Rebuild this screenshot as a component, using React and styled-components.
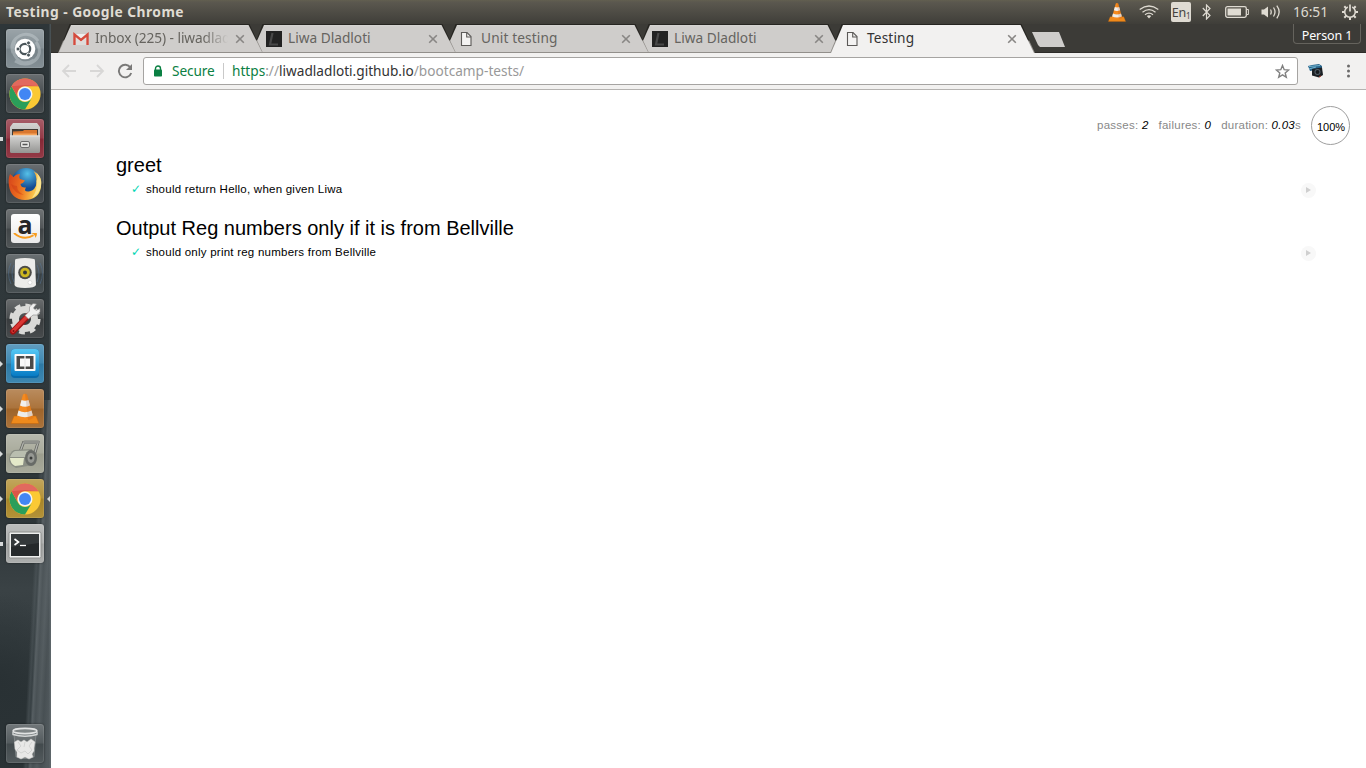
import React from "react";
import styled, { createGlobalStyle, css } from "styled-components";

const GlobalStyle = createGlobalStyle`
  * { box-sizing: border-box; }
  html, body { margin: 0; padding: 0; }
  body { width: 1366px; height: 768px; overflow: hidden; background: #fff; }
  svg { display: block; flex: none; }
`;

const uiFont = css`font-family: "Noto Sans", "Open Sans", sans-serif;`;

const Desktop = styled.div`
  display: flex;
  flex-direction: column;
  width: 1366px;
  height: 768px;
  overflow: hidden;
`;

/* ---------- top panel ---------- */
const Panel = styled.header`
  ${uiFont}
  display: flex;
  align-items: center;
  justify-content: space-between;
  height: 24px;
  flex: none;
  padding: 0 8px 0 6px;
  background: linear-gradient(#625f50 0, #5b584f 2px, #3f3e39 24px);
  color: #dfdbd2;
`;
const WindowTitle = styled.div`
  font-size: 13.8px;
  font-weight: 700;
  line-height: 24px;
  white-space: nowrap;
  letter-spacing: 0.46px;
`;
const Indicators = styled.div`
  display: flex;
  align-items: center;
  height: 24px;
`;
const Slot = styled.div`
  display: flex;
  width: ${(p) => p.$w}px;
  margin-left: ${(p) => p.$gap || 0}px;
`;
const Keyboard = styled(Slot)`
  align-items: center;
  justify-content: center;
  height: 20px;
  border-radius: 2px;
  background: #dfdbd2;
  color: #45433e;
  font-size: 12.5px;
  letter-spacing: -0.3px;
  sub { font-size: 8px; line-height: 8px; align-self: flex-end; margin-bottom: 2px; }
`;
const Clock = styled(Slot)`
  font-size: 13.8px;
  line-height: 24px;
  letter-spacing: -0.05px;
  white-space: nowrap;
`;

/* ---------- launcher ---------- */
const Workspace = styled.div`
  display: flex;
  flex: 1;
  min-height: 0;
`;
const Launcher = styled.nav`
  display: flex;
  flex-direction: column;
  justify-content: space-between;
  width: 51px;
  flex: none;
  padding: 5px 0 5px;
  background:
    linear-gradient(90deg, transparent 49px, rgba(110,120,124,.4) 50px),
    linear-gradient(93deg, transparent 42px, rgba(85,94,98,.5) 45px, rgba(70,79,83,.5) 47px, rgba(105,113,117,.7) 49px, rgba(86,94,98,.7) 52px, rgba(100,108,112,.7) 56px, rgba(84,92,96,.7) 60px, rgba(98,106,110,.7) 66px) 0 100% / 51px 368px no-repeat,
    radial-gradient(ellipse 70px 90px at 0 660px, #293134, transparent),
    linear-gradient(#2e3639 0, #30383b 45%, #2d3538 66%, #3a4245 76%, #343c3f 84%, #2b3336 90%, #2b3336 100%);
`;
const LauncherGroup = styled.div`
  display: flex;
  flex-direction: column;
  gap: 6px;
`;
const LauncherItem = styled.div`
  display: flex;
  align-items: center;
  height: 39px;
`;
const Marker = styled.div`
  width: 6px;
  flex: none;
  svg { fill: #d6d9da; }
`;
const Tile = styled.div`
  display: flex;
  justify-content: center;
  width: 38px;
  flex: none;
  height: 39px;
  border-radius: 3px;
  background: linear-gradient(rgba(255,255,255,.24), rgba(255,255,255,.08) 48%, rgba(0,0,0,.04) 52%, rgba(255,255,255,.07)), ${(p) => p.$bg};
  box-shadow: inset 0 0 0 1px rgba(255,255,255,.1), 0 0 2px rgba(0,0,0,.55);
`;

/* ---------- browser chrome ---------- */
const Browser = styled.main`
  display: flex;
  flex-direction: column;
  flex: 1;
  min-width: 0;
  background: #fff;
`;
const TabStrip = styled.div`
  ${uiFont}
  display: flex;
  height: 29px;
  padding-left: 7px;
  background: #3c3b37;
  box-shadow: inset 0 -1px #2e2c29;
`;
const Tab = styled.div`
  position: relative;
  isolation: isolate;
  display: flex;
  align-items: center;
  width: 205px;
  height: 29px;
  margin-right: -12px;
  padding: 0 18px 0 15px;
  z-index: ${(p) => p.$z};
  color: ${(p) => (p.$active ? "#333" : "#66645f")};
  &::before, &::after { content: ""; position: absolute; z-index: -1; }
  &::before {
    inset: 0;
    background: linear-gradient(#262521 0, #262521 16px, #928f8b 17px);
    clip-path: polygon(0 100%, 5px 17px, 11.5px 0, 191.5px 0, 198px 14px, 100% 100%);
  }
  &::after {
    inset: 1px 1px ${(p) => (p.$active ? 0 : 1)}px;
    background: ${(p) => (p.$active ? "#f2f1f0" : "linear-gradient(#d6d5d3, #cfcdcb 2px)")};
    clip-path: polygon(0 100%, 12px 0, 189.5px 0, 100% 100%);
  }
`;
const TabTitle = styled.span`
  flex: 1;
  margin-left: 6px;
  white-space: nowrap;
  font-size: 13.7px;
  line-height: 25px;
  letter-spacing: ${(p) => p.$ls}px;
  padding-bottom: 2px;
  ${(p) => p.$fade && css`mask-image: linear-gradient(90deg, #000 108px, transparent 133px);`}
`;
const NewTab = styled.div`
  width: 34px;
  height: 16px;
  margin: 8px 0 0 9px;
  background: #cfcdcb;
  clip-path: polygon(0 0, 27px 0, 33px 15px, 8px 15px, 6px 13px);
`;
const Profile = styled.div`
  align-self: flex-start;
  width: 68px;
  height: 20px;
  margin: 0 5px 0 auto;
  border: 1px solid #65635d;
  border-top: 0;
  border-radius: 0 0 4px 4px;
  color: #fff;
  font-size: 12.5px;
  line-height: 23px;
  text-align: center;
  white-space: nowrap;
  letter-spacing: -0.1px;
`;
const Toolbar = styled.div`
  ${uiFont}
  display: flex;
  align-items: center;
  height: 37px;
  flex: none;
  padding: 0 10px;
  background: #f2f1f0;
  border-bottom: 1px solid #b5b3b1;
`;
const NavButtons = styled.div`
  display: flex;
  gap: 12px;
  width: 82px;
`;
const AddressBar = styled.div`
  display: flex;
  align-items: center;
  width: 1155px;
  height: 28px;
  padding: 0 7px 0 9px;
  background: #fff;
  border: 1px solid #a6a4a2;
  border-radius: 3px;
  font-size: 13.65px;
  line-height: 26px;
  white-space: nowrap;
`;
const Secure = styled.span`
  width: 52px;
  margin-left: 9px;
  padding-right: 8px;
  border-right: 1px solid #c9c9c9;
  line-height: 16px;
  letter-spacing: -0.1px;
  color: #0b8043;
`;
const Url = styled.span`
  flex: 1;
  margin-left: 8px;
  color: #999;
  b { font-weight: 400; color: #333; }
  i { font-style: normal; color: #0b8043; }
`;
const ToolbarEnd = styled.div`
  display: flex;
  align-items: center;
  gap: 22px;
  margin-left: 10px;
`;

/* ---------- test report ---------- */
const Report = styled.section`
  display: flex;
  flex-direction: column;
  padding: 15px 15px 0 65px;
  font-family: "Liberation Sans", Arial, sans-serif;
  color: #000;
`;
const Stats = styled.div`
  display: flex;
  align-items: center;
  justify-content: flex-end;
  height: 40px;
  font-size: 11.5px;
  letter-spacing: 0.25px;
  color: #888;
`;
const Stat = styled.span`
  margin-right: 10px;
  white-space: nowrap;
  em { color: #000; }
`;
const Progress = styled.div`
  width: 39px;
  height: 39px;
  margin-right: 1px;
  border: 1px solid #9f9f9f;
  border-radius: 50%;
  color: #000;
  font-size: 11px;
  line-height: 40px;
  letter-spacing: 0;
  text-indent: 1px;
  text-align: center;
  white-space: nowrap;
`;
const Suite = styled.div`
  display: flex;
  flex-direction: column;
  margin-top: ${(p) => (p.$first ? 8 : 15)}px;
`;
const SuiteTitle = styled.h1`
  margin: 0;
  font-size: 20px;
  font-weight: 400;
  line-height: 24px;
`;
const TestRow = styled.div`
  display: flex;
  align-items: center;
  height: 24px;
  padding: 0 35px 0 15px;
  font-size: 11.5px;
`;
const Check = styled.span`
  width: 15px;
  color: #00d6b2;
  font: 12px "DejaVu Sans", sans-serif;
`;
const TestName = styled.span`
  flex: 1;
  white-space: nowrap;
  letter-spacing: 0.235px;
`;
const Replay = styled.span`
  display: flex;
  align-items: center;
  justify-content: center;
  width: 15px;
  height: 15px;
  margin-top: 2px;
  border-radius: 50%;
  background: #f8f8f8;
`;

/* ---------- icons ---------- */
const ChromeLogo = () => (
  <svg width="40" height="39" viewBox="0 0 40 39">
    <g transform="translate(20 20)">
      <circle r="15.600" fill="#fbc934" />
      <path d="M-13.5-7.800A15.600 15.600 0 0 0 0 15.600L6.900 4A8 8 0 0 1-6.900 4Z" fill="#2b9e5a" />
      <path d="M-13.5-7.800A15.600 15.600 0 0 1 13.500-7.800H0A8 8 0 0 0-6.900 4Z" fill="#dc5549" />
      <path d="M-13.5-7.800A15.600 15.600 0 0 1 13.500-7.800L0-9Z" fill="#e98378" opacity=".45" />
      <circle r="7.500" fill="#f5f5f5" />
      <circle r="6" fill="#4286f4" />
    </g>
  </svg>
);
const ConeShape = () => (
  <>
    <path d="M9 27H31L34 34.500H6Z" fill="#ef8a1b" stroke="#c76509" strokeWidth=".5" />
    <path d="M18 5.500Q20 4 22 5.500L28.500 29Q20 33 11.500 29Z" fill="#f58a1f" />
    <path d="M16.500 11Q20 12.500 23.500 11L25 16.500Q20 19 15 16.500Z" fill="#f1efed" />
    <path d="M13.500 21.500Q20 25 26.500 21.500L27.800 26.500Q20 30 12.200 26.500Z" fill="#ececea" />
    <path d="M20 4.800Q21.500 4.800 22 5.500L28.500 29Q26 30.500 23 31Z" fill="#9a3c00" opacity=".16" />
  </>
);
const Cone = ({ w = 40, h = 39, box = "0 0 40 39" }) => (
  <svg width={w} height={h} viewBox={box}><ConeShape /></svg>
);
const Ubuntu = () => (
  <svg width="40" height="39" viewBox="0 0 40 39">
    <g fill="none" stroke="#d2dadd" opacity=".38" strokeWidth="3">
      <path d="M8 24C2 8 24-2 33 12" /><path d="M31 13C42 28 24 41 10 32" /><path d="M29 31C15 40 3 24 10 12" />
    </g>
    <circle cx="20" cy="20" r="10.300" fill="#fff" />
    <circle cx="20" cy="20" r="5.200" fill="none" stroke="#4a555a" strokeWidth="2.200" />
    <g fill="#4a555a" stroke="#fff" strokeWidth=".9">
      <circle cx="13" cy="20" r="2" /><circle cx="23.500" cy="13.900" r="2" /><circle cx="23.500" cy="26.100" r="2" />
    </g>
  </svg>
);
const Files = () => (
  <svg width="40" height="39" viewBox="0 0 40 39">
    <defs><linearGradient id="cab" x2="0" y2="1"><stop stopColor="#d4d4d2" /><stop offset="1" stopColor="#949492" /></linearGradient></defs>
    <path d="M8 4H32L35 8V32Q35 34 33 34H7Q5 34 5 32V8Z" fill="url(#cab)" />
    <path d="M7 10H33V19H7Z" fill="#403a34" />
    <path d="M8 12.500L18 12 19 11H32V19H8Z" fill="#d9772f" /><path d="M8 14.500H32V19H8Z" fill="#f5a45c" />
    <path d="M5 16.500H35V32Q35 34 33 34H7Q5 34 5 32Z" fill="url(#cab)" /><path d="M5 17H35" stroke="#e2e2e0" />
    <rect x="15.500" y="22.500" width="9" height="6" rx="1.500" fill="#e4e4e2" stroke="#6b6b6b" />
    <path d="M17.500 25.500H22.500" stroke="#555" strokeWidth="1.500" />
  </svg>
);
const Firefox = () => (
  <svg width="40" height="39" viewBox="0 0 40 39">
    <defs>
      <radialGradient id="globe" cx=".55" cy=".2"><stop stopColor="#55c0e8" /><stop offset="1" stopColor="#144a92" /></radialGradient>
      <linearGradient id="fox" x1="0" y1="0" x2="1" y2=".2"><stop stopColor="#d5401a" /><stop offset=".5" stopColor="#ee7420" /><stop offset="1" stopColor="#fbd957" /></linearGradient>
    </defs>
    <circle cx="21" cy="18.500" r="14.500" fill="url(#globe)" />
    <path d="M5 10L8.500 13Q11 10 15 10Q13.500 12.500 15 15L20 16.500Q18 19.500 15.500 20Q16 24 21 23.500Q18 28 24 27.500Q31 26 31.500 18.500Q32 12 28.500 7Q38 12 36 23Q34 35.500 20 36Q6 35.500 4 22Q3 15 5 10Z" fill="url(#fox)" />
    <path d="M31.500 17Q34 12 31 8Q38 15 35.500 24Q33 31 27 34Q33 26 31.500 17Z" fill="#fae59b" opacity=".85" />
    <path d="M6 20Q9 30 19 31Q12 28 12 22Q9 22 6 20Z" fill="#c83315" opacity=".4" />
  </svg>
);
const AmazonBox = styled.div`
  display: flex;
  flex-direction: column;
  align-items: center;
  width: 29px;
  height: 29px;
  margin: 5px 4.5px;
  border-radius: 3px;
  background: linear-gradient(#fff, #e9e9e9);
`;
const AmazonLetter = styled.div`
  height: 30px;
  margin: -5px 0 -6px;
  color: #262626;
  font: 700 25px/30px "Open Sans", sans-serif;
`;
const Amazon = () => (
  <AmazonBox>
    <AmazonLetter>a</AmazonLetter>
    <svg width="27" height="8" viewBox="0 0 28 9">
      <path d="M1 0Q12 9.500 23 2.500" fill="none" stroke="#f79c1d" strokeWidth="2.200" />
      <path d="M20 0Q25-1 27 .500Q27 4 24.500 6Q26 2 20 0Z" fill="#f79c1d" />
    </svg>
  </AmazonBox>
);
const Speaker = () => (
  <svg width="40" height="39" viewBox="0 0 40 39">
    <g fill="none" stroke="#5779a0" opacity=".45"><path d="M9 11Q5 19 9 28M32 11Q36 19 32 28" /><path d="M6 9Q1 19 6 30M35 9Q40 19 35 30" /></g>
    <path d="M11 5Q20 3 29 5Q30 5 30 7L31 31Q30 34 20 34Q10 34 9.500 31L10 7Q10 5 11 5Z" fill="#ececea" />
    <circle cx="20" cy="18.500" r="6.800" fill="#4c4c48" /><circle cx="20" cy="18.500" r="4.800" fill="#cdb71e" />
    <circle cx="20" cy="18.500" r="2" fill="#343839" /><circle cx="25" cy="28.500" r="2" fill="#fff" stroke="#ccc" strokeWidth=".6" />
  </svg>
);
const Settings = () => (
  <svg width="40" height="39" viewBox="0 0 40 39">
    <circle cx="20" cy="20" r="9.500" fill="none" stroke="#d9d9d7" strokeWidth="7" />
    <circle cx="20" cy="20" r="13.600" fill="none" stroke="#d9d9d7" strokeWidth="4" strokeDasharray="5.700 4.980" />
    <path d="M8 32.500L23 17" stroke="#9c1313" strokeWidth="6" strokeLinecap="round" />
    <path d="M8 32L22.500 17" stroke="#d93633" strokeWidth="3.600" strokeLinecap="round" />
    <path d="M24.500 12L24.500 8L28 4.500L31.500 5L28.500 9L31 11.500L35 9.500L35 13L31.500 16L28 16L23.500 20L20 16.500Z" fill="#efefef" stroke="#888" strokeWidth=".6" />
    <circle cx="8.500" cy="32" r="1" fill="#771111" />
  </svg>
);
const Brackets = () => (
  <svg width="40" height="39" viewBox="0 0 40 39">
    <defs><linearGradient id="brk" x2="0" y2="1"><stop stopColor="#55c8f4" /><stop offset="1" stopColor="#087cc5" /></linearGradient></defs>
    <rect x="6" y="5" width="28" height="29" rx="4" fill="#086aab" /><rect x="6" y="5" width="28" height="27" rx="4" fill="url(#brk)" />
    <rect x="9.500" y="10" width="21" height="17" rx="1" fill="#fafafa" />
    <rect x="11.500" y="12" width="17" height="13" fill="#4a4a49" />
    <rect x="15" y="14.500" width="10" height="8" fill="#fafafa" />
    <path d="M20 12V15M20 22V25" stroke="#fafafa" strokeWidth="1.200" /><path d="M20 14.500V22.500" stroke="#ddd" strokeWidth=".6" />
  </svg>
);
const Roller = () => (
  <svg width="40" height="39" viewBox="0 0 40 39">
    <path d="M15 18L18.500 8.500H33L29 22" fill="none" stroke="#626460" strokeWidth="2.800" />
    <path d="M15 18L18.500 8.500H33L29.500 20" fill="none" stroke="#b2b4ae" strokeWidth="1.300" />
    <path d="M20 8H33" stroke="#90928d" strokeWidth="3.600" strokeLinecap="round" />
    <path d="M9 16L27 15 28 31 11 34Q4 31 4 25Q5 18 9 16Z" fill="#898d83" />
    <path d="M10 17L24 16.500 23 23H5Q7 18 10 17Z" fill="#b9beaf" />
    <path d="M5 24H19L18 31L10 32Q5 29 5 24Z" fill="#e4e9c9" />
    <ellipse cx="26" cy="24" rx="6" ry="8" fill="#686b67" /><ellipse cx="26" cy="24" rx="3.500" ry="5" fill="#969893" />
    <circle cx="26" cy="24" r="1.500" fill="#3b3d3b" />
  </svg>
);
const Terminal = () => (
  <svg width="40" height="39" viewBox="0 0 40 39">
    <rect x="4" y="8" width="32" height="26" rx="1.500" fill="#edeeed" stroke="#8e908e" />
    <rect x="6" y="10" width="28" height="22" fill="#25292b" /><path d="M6 10H34V19L6 23Z" fill="#43494b" opacity=".5" />
    <path d="M9.500 15L13.500 18L9.500 21" fill="none" stroke="#fff" strokeWidth="1.600" /><path d="M15 21.500H21" stroke="#fff" strokeWidth="1.300" />
  </svg>
);
const Trash = () => (
  <svg width="40" height="39" viewBox="0 0 40 39">
    <path d="M9 10H31L29 33Q20 36 11 33Z" fill="#7c8182" opacity=".5" stroke="#b8bcbd" strokeWidth=".8" />
    <g fill="#e8e8e7" stroke="#d0d0cf" strokeWidth=".5">
      <path d="M9.500 18L13 16 16 18 19 16 22 18 26 15 30 18 29 24 29 27 27 30 28 33 24 35 20 33 16 35 12 33 12 28 10 25Z" />
      <path d="M13 18L16 22 12 26 16 29 20 27 23 30 27 26 24 22 27 18M20 18L19 23" fill="none" stroke="#bdbebd" />
    </g>
    <ellipse cx="20" cy="7" rx="12" ry="2.600" fill="#7f8586" stroke="#e1e3e3" strokeWidth="1.600" />
    <path d="M8 8V10.500Q20 14 32 10.500V8" fill="none" stroke="#d4d7d7" strokeWidth="1.400" />
  </svg>
);

const Gmail = () => (
  <svg width="16" height="16" viewBox="0 0 16 16">
    <path d="M1 3H15V14H1Z" fill="#eee" /><path d="M3 14V7L8 11 13 7V14Z" fill="#dedcda" />
    <path d="M1.500 14V3.500L8 9 14.500 3.500V14" fill="none" stroke="#d54b3d" strokeWidth="2.400" />
  </svg>
);
const Letter = () => (
  <svg width="16" height="16" viewBox="0 0 16 16">
    <rect width="16" height="16" fill="#222" /><path d="M6.500 2L4 13.500H12" fill="none" stroke="#484848" strokeWidth="2.200" />
  </svg>
);
const Doc = () => (
  <svg width="16" height="16" viewBox="0 0 16 16">
    <path d="M2.500 1.500H8L12 5.500V14.500H2.500Z" fill="#f4f3f2" stroke="#5c5a58" strokeWidth="1.100" /><path d="M7.700 1.500V6H12" fill="none" stroke="#5c5a58" strokeWidth="1.100" />
  </svg>
);
const Close = () => (
  <svg width="10" height="10" viewBox="0 0 10 10"><path d="M1.200 1.200L8.800 8.800M8.800 1.200L1.200 8.800" stroke="#888684" strokeWidth="1.600" /></svg>
);
const Arrow = ({ flip }) => (
  <svg width="16" height="16" viewBox="0 0 16 16">
    <path d={flip ? "M1 8H14M8 2L14 8L8 14" : "M15 8H2M8 2L2 8L8 14"} fill="none" stroke="#d8d7d6" strokeWidth="1.800" />
  </svg>
);
const Reload = () => (
  <svg width="16" height="16" viewBox="0 0 16 16">
    <path d="M13.400 4.500A6.300 6.300 0 1 0 14.200 10" fill="none" stroke="#7a7978" strokeWidth="1.900" /><path d="M15 1V7H9Z" fill="#7a7978" />
  </svg>
);
const Lock = () => (
  <svg width="10" height="12" viewBox="0 0 10 12"><path d="M2.500 5V3.500A2.500 2.500 0 0 1 7.500 3.500V5" fill="none" stroke="#0b8043" strokeWidth="1.400" /><rect x="1" y="4.500" width="8" height="7" rx=".8" fill="#0b8043" /></svg>
);
const Star = () => (
  <svg width="15" height="15" viewBox="0 0 15 15"><path d="M7.500 1.500L9.200 5.700 13.700 6 10.200 8.900 11.300 13.300 7.500 10.900 3.700 13.300 4.800 8.900 1.300 6 5.800 5.700Z" fill="none" stroke="#808080" strokeWidth="1.400" /></svg>
);
const Camera = () => (
  <svg width="16" height="16" viewBox="0 0 16 16">
    <path d="M0 3L4 2 11 1 14 3 14 6 2 8Z" fill="#28648b" /><path d="M1 3.500L12 2.500M1 6L8 4" stroke="#74b5d0" />
    <path d="M4 6L14 4.500 15 12 11 14.500 4 12.500Z" fill="#1c2024" /><circle cx="9.500" cy="9" r="3" fill="#55616a" /><circle cx="9.500" cy="9" r="2" fill="#15191d" />
    <path d="M11 14L13 13" stroke="#b33b2b" />
  </svg>
);
const Dots = () => (
  <svg width="4" height="14" viewBox="0 0 4 14" fill="#6b6a69"><circle cx="2.500" cy="2" r="1.500" /><circle cx="2.500" cy="7" r="1.500" /><circle cx="2.500" cy="12" r="1.500" /></svg>
);
const Wifi = () => (
  <svg width="20" height="14" viewBox="0 0 20 14" fill="none" stroke="#dfdbd2" strokeWidth="1.300">
    <path d="M.700 4.500Q10-2.500 19.300 4.500" /><path d="M3.500 7.200Q10 2 16.500 7.200" /><path d="M6 9.700Q10 6.500 14 9.700" /><path d="M7.800 11L10 13.500 12.200 11Q10 9.500 7.800 11Z" fill="#dfdbd2" stroke="none" />
  </svg>
);
const Bluetooth = () => (
  <svg width="9" height="16" viewBox="0 0 9 16"><path d="M.800 4L8 11.500 4.500 15V1L8 4.500.800 12" fill="none" stroke="#dfdbd2" strokeWidth="1.200" /></svg>
);
const Battery = () => (
  <svg width="24" height="12" viewBox="0 0 24 12"><rect x=".700" y=".700" width="20.600" height="10.600" rx="1.800" fill="none" stroke="#dfdbd2" strokeWidth="1.300" /><rect x="2.500" y="2.500" width="13.500" height="7" fill="#dfdbd2" /><path d="M22 3.500H23.400V8.500H22" fill="none" stroke="#dfdbd2" /></svg>
);
const Volume = () => (
  <svg width="20" height="14" viewBox="0 0 20 14"><path d="M.500 4.500H3L7 1.500V12.500L3 9.500H.500Z" fill="#dfdbd2" /><path d="M9.500 4.500Q11 7 9.500 9.500M12.500 2.500Q15.500 7 12.500 11.500M15.800.700Q20.500 7 15.800 13.300" fill="none" stroke="#dfdbd2" strokeWidth="1.300" /></svg>
);
const Power = () => (
  <svg width="16" height="16" viewBox="0 0 16 16" fill="none" stroke="#dfdbd2">
    <path d="M5.800 3.100A5.300 5.300 0 1 0 10.200 3.100" strokeWidth="1.600" /><path d="M8 .500V7.500" strokeWidth="1.700" />
    <path d="M2.300 2.300L4.200 4.200M13.700 2.300L11.800 4.200M0 8H2.500M13.500 8H16M2.300 13.700L4.200 11.800M13.700 13.700L11.800 11.800M8 13.500V16" strokeWidth="2" />
  </svg>
);

const apps = [
  { icon: Ubuntu, bg: "#7b878d" },
  { icon: ChromeLogo, bg: "#3b4144" },
  { icon: Files, bg: "#8b2a38", mark: "bar" },
  { icon: Firefox, bg: "#3b4145" },
  { icon: Amazon, bg: "#43484a" },
  { icon: Speaker, bg: "#3c4447" },
  { icon: Settings, bg: "#3a3e40" },
  { icon: Brackets, bg: "#2f7eab", mark: "arrow" },
  { icon: Cone, bg: "#a4682c", mark: "arrow" },
  { icon: Roller, bg: "#a2a494", mark: "arrow" },
  { icon: ChromeLogo, bg: "#ae8a29", mark: "arrow", focused: true },
  { icon: Terminal, bg: "#a6a8a7", mark: "bar" },
];
const tabs = [
  { icon: Gmail, title: "Inbox (225) - liwadlad", ls: -0.08, fade: true },
  { icon: Letter, title: "Liwa Dladloti", ls: 0 },
  { icon: Doc, title: "Unit testing", ls: 0.13 },
  { icon: Letter, title: "Liwa Dladloti", ls: 0 },
  { icon: Doc, title: "Testing", ls: 0.13, active: true },
];
const suites = [
  { title: "greet", test: "should return Hello, when given Liwa" },
  { title: "Output Reg numbers only if it is from Bellville", test: "should only print reg numbers from Bellville" },
];

const RunningMark = ({ kind }) => (
  <svg width="5" height="8" viewBox="0 0 5 8">{kind === "bar" ? <rect y="2" width="3" height="4" /> : <path d="M0 1L3 4L0 7Z" />}</svg>
);
const FocusMark = () => (
  <svg width="6" height="8" viewBox="0 0 6 8"><path d="M6 1L3 4L6 7Z" /></svg>
);

export default function App() {
  return (
    <Desktop>
      <GlobalStyle />
      <Panel>
        <WindowTitle>Testing - Google Chrome</WindowTitle>
        <Indicators>
          <Slot $w={20}><Cone w={20} h={21} box="4 3 32 34" /></Slot>
          <Slot $w={20} $gap={12}><Wifi /></Slot>
          <Keyboard $w={20} $gap={12}>En<sub>1</sub></Keyboard>
          <Slot $w={9} $gap={11}><Bluetooth /></Slot>
          <Slot $w={24} $gap={14}><Battery /></Slot>
          <Slot $w={20} $gap={12}><Volume /></Slot>
          <Clock $w={37} $gap={12}>16:51</Clock>
          <Slot $w={16} $gap={12}><Power /></Slot>
        </Indicators>
      </Panel>
      <Workspace>
        <Launcher>
          <LauncherGroup>
            {apps.map(({ icon: Icon, bg, mark, focused }, i) => (
              <LauncherItem key={i}>
                <Marker>{mark && <RunningMark kind={mark} />}</Marker>
                <Tile $bg={bg}><Icon /></Tile>
                <Marker>{focused && <FocusMark />}</Marker>
              </LauncherItem>
            ))}
          </LauncherGroup>
          <LauncherItem>
            <Marker />
            <Tile $bg="#454d50"><Trash /></Tile>
          </LauncherItem>
        </Launcher>
        <Browser>
          <TabStrip>
            {tabs.map(({ icon: Icon, title, ls, fade, active }, i) => (
              <Tab key={i} $active={active} $z={active ? 10 : 6 - i}>
                <Icon />
                <TabTitle $ls={ls} $fade={fade}>{title}</TabTitle>
                <Close />
              </Tab>
            ))}
            <NewTab />
            <Profile>Person 1</Profile>
          </TabStrip>
          <Toolbar>
            <NavButtons><Arrow /><Arrow flip /><Reload /></NavButtons>
            <AddressBar>
              <Lock />
              <Secure>Secure</Secure>
              <Url><i>https</i>://<b>liwadladloti.github.io</b>/bootcamp-tests/</Url>
              <Star />
            </AddressBar>
            <ToolbarEnd><Camera /><Dots /></ToolbarEnd>
          </Toolbar>
          <Report>
            <Stats>
              <Stat>passes: <em>2</em></Stat>
              <Stat>failures: <em>0</em></Stat>
              <Stat>duration: <em>0.03</em>s</Stat>
              <Progress>100%</Progress>
            </Stats>
            {suites.map(({ title, test }, i) => (
              <Suite key={title} $first={i === 0}>
                <SuiteTitle>{title}</SuiteTitle>
                <TestRow>
                  <Check>✓</Check>
                  <TestName>{test}</TestName>
                  <Replay><svg width="5" height="6" viewBox="0 0 5 6"><path d="M0 0L5 3L0 6Z" fill="#cfcfcf" /></svg></Replay>
                </TestRow>
              </Suite>
            ))}
          </Report>
        </Browser>
      </Workspace>
    </Desktop>
  );
}
